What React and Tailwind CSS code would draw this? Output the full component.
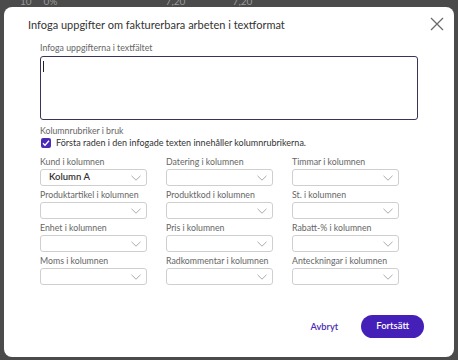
import React from 'react';

const fields = [
  { label: 'Kund i kolumnen', value: 'Kolumn A' },
  { label: 'Datering i kolumnen' },
  { label: 'Timmar i kolumnen' },
  { label: 'Produktartikel i kolumnen' },
  { label: 'Produktkod i kolumnen' },
  { label: 'St. i kolumnen' },
  { label: 'Enhet i kolumnen' },
  { label: 'Pris i kolumnen' },
  { label: 'Rabatt-% i kolumnen' },
  { label: 'Moms i kolumnen' },
  { label: 'Radkommentar i kolumnen' },
  { label: 'Anteckningar i kolumnen' },
];

const Chevron = () => (
  <svg width="10" height="6" viewBox="0 0 10 6" fill="none" className="shrink-0">
    <path d="M0.5 0.8l4.5 4.4 4.5-4.4" stroke="#a0a0a0" strokeWidth="0.9" />
  </svg>
);

const SelectField = ({ label, value }) => (
  <div className="flex flex-col">
    <span className="text-[8.75px] leading-[12px] text-[#666] mb-[1px]">{label}</span>
    <div className="w-[107px] h-[17px] rounded-[3px] border border-[#cfcfcf] bg-white flex items-center justify-between pl-[8px] pr-[5px]">
      <span className="text-[9.5px] text-[#333] font-semibold">{value || ''}</span>
      <Chevron />
    </div>
  </div>
);

export default function App() {
  return (
    <div className="relative w-[458px] h-[360px] bg-[#4b4b4b] overflow-hidden" style={{ fontFamily: 'Lato, "Noto Sans", sans-serif' }}>
      {/* background table row peeking out behind the dialog */}
      <div className="flex gap-[12px] pl-[20px] -mt-[6px] text-[10px] text-[#9a9a9a]">
        <span>10</span>
        <span className="w-[110px]">0%</span>
        <span className="w-[55px]">7,20</span>
        <span>7,20</span>
      </div>

      <div className="absolute left-[4px] top-[7px] w-[450px] h-[350px] bg-white rounded-[8px] flex flex-col">
        <div className="flex items-start justify-between pl-[24px] pr-[10px] pt-[10px]">
          <h1 className="text-[11px] leading-[16px] text-[#333]">Infoga uppgifter om fakturerbara arbeten i textformat</h1>
          <svg width="14" height="14" viewBox="0 0 14 14" className="mt-0">
            <path d="M1 1l12 12M13 1L1 13" stroke="#6b6b6b" strokeWidth="1.3" />
          </svg>
        </div>

        <div className="pl-[36px] pr-[36px] mt-[9px] flex flex-col">
          <span className="text-[8.75px] leading-[12px] text-[#666]">Infoga uppgifterna i textfältet</span>
          <div className="mt-[2px] h-[64px] w-[378px] border border-[#3a3458] rounded-[3px] pl-[2px] pt-[4px]">
            <div className="w-px h-[11px] bg-[#222]" />
          </div>

          <span className="mt-[5px] text-[8.75px] leading-[12px] text-[#666]">Kolumnrubriker i bruk</span>
          <div className="flex items-center gap-[5px] pl-[1px]">
            <div className="w-[10px] h-[10px] rounded-[2px] bg-[#4a2bb5] flex items-center justify-center">
              <svg width="8" height="8" viewBox="0 0 8 8">
                <path d="M1 4.2l2 2L7 1.8" stroke="white" strokeWidth="1.3" fill="none" />
              </svg>
            </div>
            <span className="text-[9px] leading-[12px] text-[#333]">Första raden i den infogade texten innehåller kolumnrubrikerna.</span>
          </div>

          <div className="mt-[7px] grid grid-cols-[126px_126px_126px] gap-y-[3px]">
            {fields.map((f) => (
              <SelectField key={f.label} label={f.label} value={f.value} />
            ))}
          </div>
        </div>

        <div className="mt-auto mb-[19px] flex items-center justify-end gap-[23px] pr-[30px]">
          <span className="text-[9.3px] font-semibold text-[#4a2bb5]">Avbryt</span>
          <button className="h-[23px] px-[15px] rounded-full bg-[#4520b8] text-white text-[9.5px] font-semibold">Fortsätt</button>
        </div>
      </div>
    </div>
  );
}
